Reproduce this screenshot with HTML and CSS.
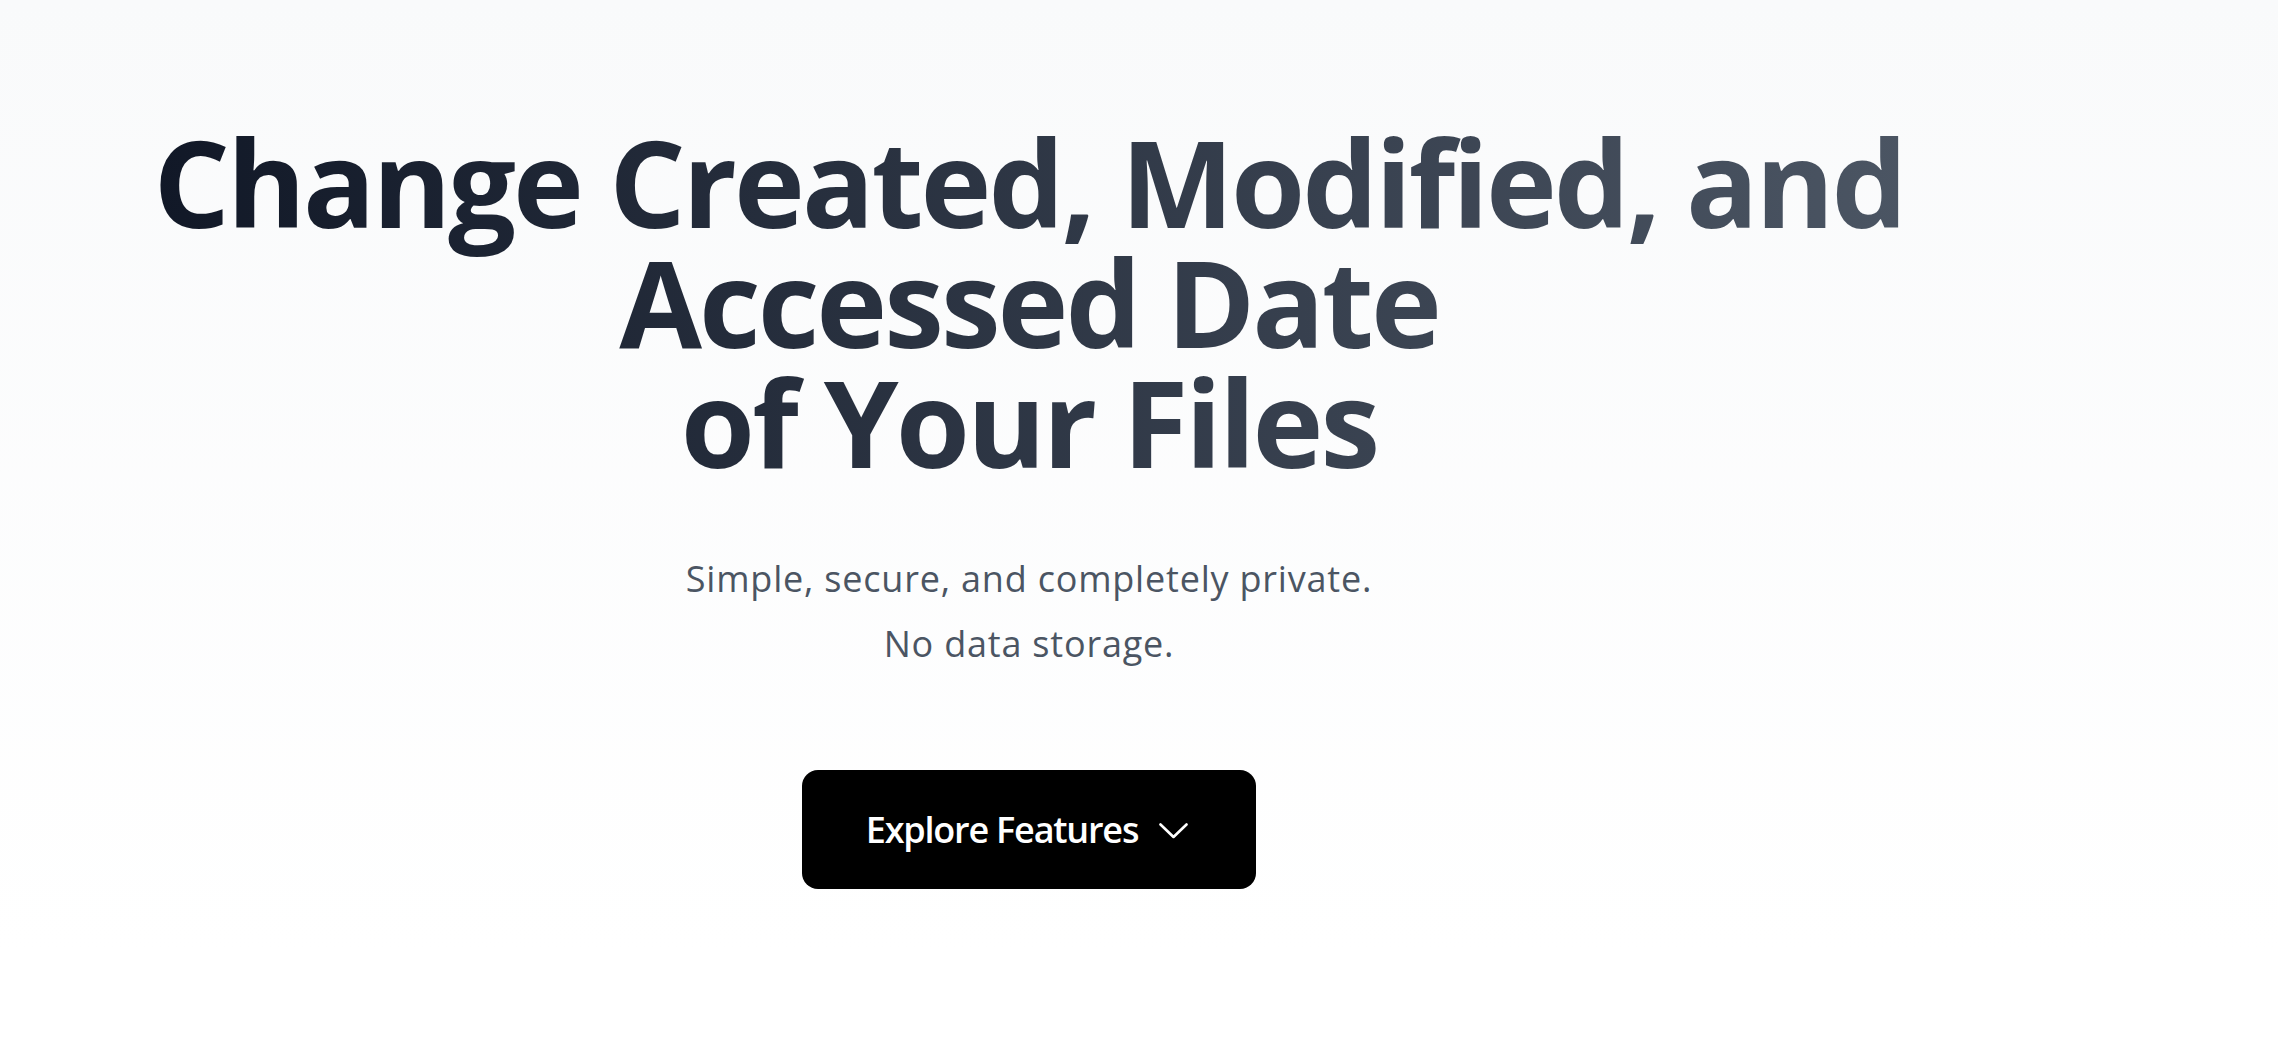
FILE: index.html
```html
<!DOCTYPE html>
<html lang="en">
<head>
    <meta charset="UTF-8">
    <meta name="viewport" content="width=device-width, initial-scale=1.0">
    <title>File Date Changer</title>
    <link rel="stylesheet" href="styles.css">
</head>
<body>
    <main class="hero">
        <div class="hero-inner">
            <!-- Headline -->
            <h1 class="hero-title">Change Created, Modified, and<br>Accessed Date<br>of Your Files</h1>

            <p class="hero-text">Simple, secure, and completely private.<br>No data storage.</p>

            <button class="explore-btn" type="button">
                Explore Features
                <svg class="chevron" width="29" height="16" viewBox="0 0 29 16" fill="none">
                    <path d="M1.5 1.5 L14.5 14 L27.5 1.5" stroke="currentColor" stroke-width="2.6" stroke-linecap="round" stroke-linejoin="round"/>
                </svg>
            </button>
        </div>
    </main>
</body>
</html>
```

FILE: styles.css
```css
html, body {
    margin: 0;
    padding: 0;
}
body {
    font-family: "Open Sans", "Noto Sans", Arial, sans-serif;
    background: #fff;
    color: #111827;
}
.hero {
    min-height: 950px;
    background: linear-gradient(to bottom, #f9fafb 0%, #ffffff 100%);
    padding-right: 220px;
}
.hero-inner {
    display: flex;
    flex-direction: column;
    align-items: center;
    text-align: center;
    padding-top: 122px;
}
.hero-title {
    margin: 0;
    font-size: 120px;
    font-weight: 700;
    line-height: 120px;
    letter-spacing: -3px;
    background: linear-gradient(to right, #111827, #4b5563);
    -webkit-background-clip: text;
    background-clip: text;
    color: transparent;
}
.hero-text {
    margin: 64px 0 0;
    font-size: 36px;
    line-height: 65px;
    letter-spacing: 0.8px;
    color: #4b5563;
}
.explore-btn {
    margin-top: 94px;
    display: flex;
    align-items: center;
    gap: 21px;
    height: 119px;
    padding: 0 68px 0 64px;
    border: none;
    border-radius: 16px;
    background: #000;
    color: #fff;
    font-family: inherit;
    font-size: 36px;
    font-weight: 600;
    letter-spacing: -1.2px;
    cursor: pointer;
}
.chevron {
    display: block;
    margin-top: 2px;
}
```
